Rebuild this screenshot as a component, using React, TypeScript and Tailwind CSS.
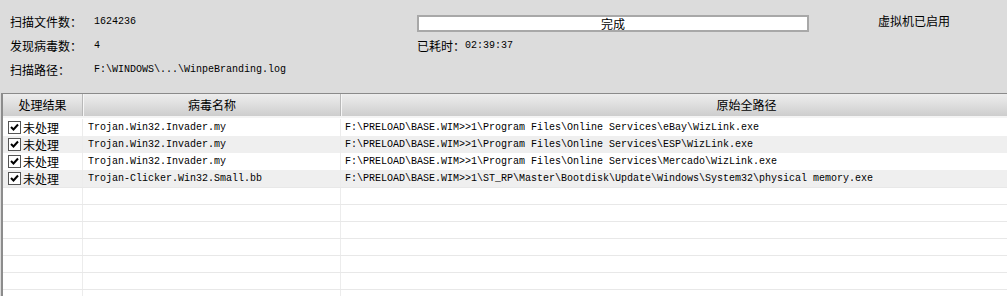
import React from 'react';

const cjk = "font-['SimSun','Noto_Sans_CJK_SC',sans-serif]";
const mono = "font-['Liberation_Mono','Noto_Sans_CJK_SC',monospace]";

const rows = [
  { name: 'Trojan.Win32.Invader.my', path: 'F:\\PRELOAD\\BASE.WIM>>1\\Program Files\\Online Services\\eBay\\WizLink.exe' },
  { name: 'Trojan.Win32.Invader.my', path: 'F:\\PRELOAD\\BASE.WIM>>1\\Program Files\\Online Services\\ESP\\WizLink.exe' },
  { name: 'Trojan.Win32.Invader.my', path: 'F:\\PRELOAD\\BASE.WIM>>1\\Program Files\\Online Services\\Mercado\\WizLink.exe' },
  { name: 'Trojan-Clicker.Win32.Small.bb', path: 'F:\\PRELOAD\\BASE.WIM>>1\\ST_RP\\Master\\Bootdisk\\Update\\Windows\\System32\\physical memory.exe' },
];

function CheckBox() {
  return (
    <span className="w-[13px] h-[13px] border border-[#555] bg-white flex items-center justify-center shrink-0">
      <svg width="9" height="9" viewBox="0 0 9 9">
        <path d="M1 4 L3.5 6.5 L8 1.5" stroke="#000" strokeWidth="2" fill="none" />
      </svg>
    </span>
  );
}

export default function App() {
  return (
    <div className={`w-[1007px] h-[296px] bg-[#dcdcdc] overflow-hidden flex flex-col text-[12px] text-black ${cjk}`}>
      {/* summary panel */}
      <div className="h-[93px] flex shrink-0">
        <div className="w-[417px] pl-[10px] pt-[13px] flex flex-col gap-[7px]">
          <div className="flex items-center h-[17px]">
            <span className="w-[84px]">扫描文件数：</span>
            <span className={`${mono} text-[10px]`}>1624236</span>
          </div>
          <div className="flex items-center h-[17px]">
            <span className="w-[84px]">发现病毒数：</span>
            <span className={`${mono} text-[10px]`}>4</span>
          </div>
          <div className="flex items-center h-[17px]">
            <span className="w-[84px]">扫描路径：</span>
            <span className={`${mono} text-[10px]`}>F:\WINDOWS\...\WinpeBranding.log</span>
          </div>
        </div>
        <div className="w-[392px] pt-[15px] flex flex-col">
          <div className="h-[17px] border-2 border-[#a8a8a8] bg-white flex items-center justify-center leading-none">完成</div>
          <div className="flex items-center h-[17px] mt-[5px]">
            <span>已耗时：</span>
            <span className={`${mono} text-[10px]`}>02:39:37</span>
          </div>
        </div>
        <div className="pl-[69px] pt-[12px]">
          <div className="h-[17px] flex items-center">虚拟机已启用</div>
        </div>
      </div>

      {/* result table */}
      <div className="flex-1 border-t border-[#8a8a8a] border-l-2 border-l-[#8c8c8c] ml-[1px] bg-white overflow-hidden">
        <div className="flex h-[24px] bg-gradient-to-b from-[#ededed] via-[#dedede] to-[#cdcdcd] border-b-2 border-b-[#f4f4f4]">
          <div className="w-[80px] shrink-0 flex items-center justify-center border-r border-[#b8b8b8]">处理结果</div>
          <div className="w-[258px] shrink-0 flex items-center justify-center border-r border-[#b8b8b8] border-l border-l-[#f6f6f6]">病毒名称</div>
          <div className="w-[810px] shrink-0 flex items-center justify-center border-l border-l-[#f6f6f6]">原始全路径</div>
        </div>
        <div className="h-[1px] bg-white" />
        {rows.map((r, i) => (
          <div key={i} className={`flex h-[17px] ${i % 2 === 1 ? 'bg-[#efefef]' : 'bg-white'}`}>
            <div className="w-[80px] shrink-0 flex items-center gap-[2px] pl-[5px] border-r border-[#ececec]">
              <CheckBox />
              <span className="leading-none">未处理</span>
            </div>
            <div className={`w-[258px] shrink-0 flex items-center pl-[5px] border-r border-[#ececec] ${mono} text-[10px] whitespace-pre`}>{r.name}</div>
            <div className={`flex-1 flex items-center pl-[4px] ${mono} text-[10px] whitespace-pre`}>{r.path}</div>
          </div>
        ))}
        {Array.from({ length: 7 }).map((_, i) => (
          <div key={i} className="flex h-[17px] border-t border-[#e8e8e8]">
            <div className="w-[80px] shrink-0 border-r border-[#ececec]" />
            <div className="w-[258px] shrink-0 border-r border-[#ececec]" />
            <div className="flex-1" />
          </div>
        ))}
      </div>
    </div>
  );
}
